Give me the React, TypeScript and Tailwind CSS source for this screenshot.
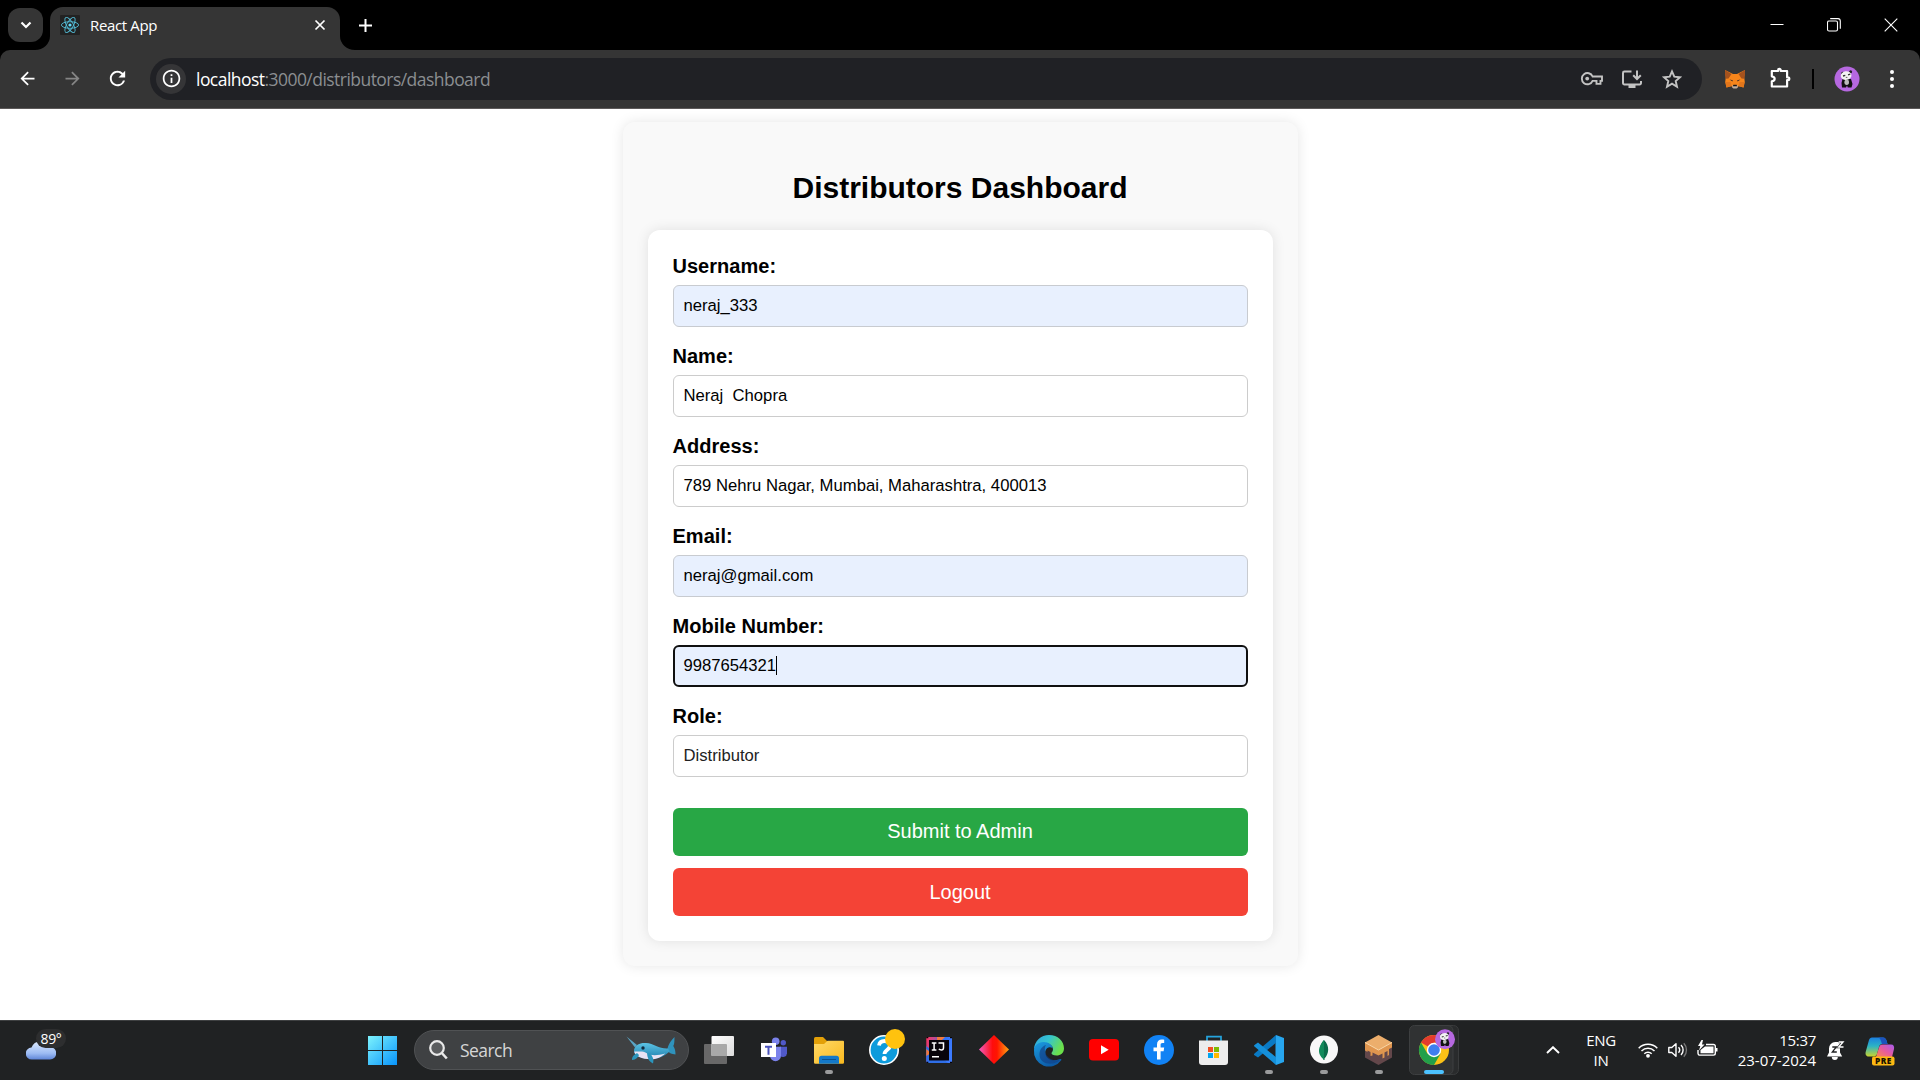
import React from "react";
import {
  MdArrowBack,
  MdArrowForward,
  MdRefresh,
  MdInfoOutline,
} from "react-icons/md";

const UI = "font-['Open_Sans','Noto_Sans',sans-serif]";

/* ---------- browser chrome ---------- */

function ReactLogo() {
  return (
    <svg width="20" height="20" viewBox="0 0 20 20" className="shrink-0">
      <rect width="20" height="20" rx="1" fill="#222" />
      <g fill="none" stroke="#53bcd6" strokeWidth="0.9">
        <ellipse cx="10" cy="10" rx="8.6" ry="3.3" />
        <ellipse cx="10" cy="10" rx="8.6" ry="3.3" transform="rotate(60 10 10)" />
        <ellipse cx="10" cy="10" rx="8.6" ry="3.3" transform="rotate(120 10 10)" />
      </g>
      <circle cx="10" cy="10" r="1.6" fill="#61dafb" />
    </svg>
  );
}

function TabStrip() {
  return (
    <div className="flex h-[50px] items-end bg-black">
      <div className="ml-2 mb-2 flex h-[34px] w-[35px] items-center justify-center rounded-xl bg-[#353535]">
        <svg width="12" height="8" viewBox="0 0 12 8" fill="none" stroke="#fff" strokeWidth="2.2">
          <path d="M1.5 1.5 6 6l4.500-4.500" />
        </svg>
      </div>
      <svg width="7" height="14" viewBox="8 0 7 14" className="w-[7px] shrink-0 overflow-visible">
        <path d="M0 14A15 14 0 0 0 15 0V14Z" fill="#353535" />
      </svg>
      <div className="flex h-[43px] w-[290px] items-center rounded-t-[13px] bg-[#353535] pb-[7px] pl-[10px] pr-[14px]">
        <ReactLogo />
        <span className="ml-[10px] flex-1 whitespace-nowrap text-[15px] tracking-[-0.35px] text-white">React App</span>
        <svg width="12" height="12" viewBox="0 0 12 12" stroke="#fff" strokeWidth="1.7">
          <path d="M1.500 1.500l9 9M10.500 1.500l-9 9" />
        </svg>
      </div>
      <svg width="15" height="14" viewBox="0 0 15 14" className="shrink-0">
        <path d="M15 14A15 14 0 0 1 0 0V14Z" fill="#353535" />
      </svg>
      <svg width="13" height="13" viewBox="0 0 13 13" className="mb-[18px] ml-[4px]" stroke="#fff" strokeWidth="2">
        <path d="M6.500 0v13M0 6.500h13" />
      </svg>
      <div className="flex-1" />
      <div className="mb-[18px] flex items-center gap-[43px] pr-[22px]">
        <svg width="14" height="14" viewBox="0 0 14 14" stroke="#fff" strokeWidth="1">
          <path d="M.5 6.500h13" />
        </svg>
        <svg width="14" height="14" viewBox="0 0 14 14" fill="none" stroke="#fff" strokeWidth="1.1">
          <rect x=".5" y="3" width="10" height="10" rx="1.500" />
          <path d="M3.200.6H11A2.500 2.500 0 0 1 13.300 3v7.700" />
        </svg>
        <svg width="14" height="14" viewBox="0 0 14 14" stroke="#fff" strokeWidth="1.1">
          <path d="M.7.7l12.600 12.600M13.300.7.7 13.300" />
        </svg>
      </div>
    </div>
  );
}

function Panda({ x, y, r }: { x: number; y: number; r: number }) {
  return (
    <g transform={`translate(${x} ${y}) scale(${r / 12.5})`}>
      <circle r="12.500" fill="#b668e0" />
      <path d="M-4.500 0 4 0 5.500 5 4.500 8.500H.8L0 6.500l-1 2h-4L-5.500 4Z" fill="#111" />
      <ellipse cx="-.3" cy="3.200" rx="2.300" ry="2.700" fill="#bbb" />
      <circle cx="-4.300" cy="-5.800" r="1.500" fill="#222" />
      <circle cx="3.600" cy="-7.300" r="1.500" fill="#222" />
      <ellipse cx="-.3" cy="-3.500" rx="5.400" ry="4.300" fill="#f3f3f3" transform="rotate(-10)" />
      <path d="M-4-3l2.300-.6M1-4.200l2.300-.6" stroke="#333" strokeWidth="1.300" />
      <path d="M-1.200-1.600h1.600" stroke="#555" strokeWidth=".9" />
    </g>
  );
}

function Toolbar() {
  return (
    <div className="bg-black">
      <div className="flex h-[59px] items-center rounded-t-[10px] border-b border-[#5c5959] bg-[#353535] pb-px">
        <div className="flex items-center pl-[17px]">
          <MdArrowBack className="size-[21px] text-white" />
          <MdArrowForward className="ml-[24px] size-[21px] text-[#858585]" />
          <MdRefresh className="ml-[23px] size-[23px] text-white" />
        </div>
        <div className="ml-[21px] flex h-[42px] w-[1552px] shrink-0 items-center rounded-full bg-[#202125] pl-[6px] pr-[20px]">
          <div className="flex size-[30px] items-center justify-center rounded-full bg-[#353537]">
            <MdInfoOutline className="size-[21px] text-white" />
          </div>
          <div className="ml-[10px] flex-1 whitespace-nowrap pt-[2px] text-[17.500px] tracking-[-0.54px] text-[#8b8e91]">
            <span className="text-white">localhost</span>:3000/distributors/dashboard
          </div>
          <div className="flex items-center">
            <svg width="24" height="16" viewBox="0 0 24 16" fill="none" stroke="#c3c3c3" strokeWidth="1.900">
              <path d="M12.600 5.500H22v4.400h-1.500v3h-4v-3h-3.900A5.600 5.600 0 1 1 12.600 5.500Z" />
              <circle cx="7.200" cy="7.600" r="1.900" fill="#c3c3c3" stroke="none" />
            </svg>
            <svg width="22" height="20" viewBox="0 0 22 20" fill="none" stroke="#c3c3c3" strokeWidth="2" className="ml-[17px]">
              <path d="M10.500 2.500H3.400A1.400 1.400 0 0 0 2 3.900v10.200a1.400 1.400 0 0 0 1.400 1.400h15.200a1.400 1.400 0 0 0 1.400-1.400V12" />
              <path d="M7.500 17.500h7" strokeWidth="3" />
              <path d="M16 1.500v8M12.200 6.200 16 10l3.800-3.800" />
            </svg>
            <svg width="20" height="20" viewBox="0 0 20 20" fill="none" stroke="#c3c3c3" strokeWidth="1.900" className="ml-[19px]">
              <path d="M10 2.400l2.300 5.300 5.700.5-4.300 3.800 1.300 5.700L10 14.700l-5 3 1.300-5.700L2 8.200l5.700-.5Z" />
            </svg>
          </div>
        </div>
        <svg width="22" height="20" viewBox="0 0 22 20" className="ml-[22px] mt-px">
          <path d="M1 1l8 4h4l8-4-.8 7 .6 5-1.200 5.500-5-1.200-2 1.700h-3.200l-2-1.700-5 1.200L1.200 13l.6-5Z" fill="#f6851b" />
          <path d="M1 1l6.500 4-3 4.500-2.700.3L1 6ZM21 1l-6.500 4 3 4.500 2.700.3L21 6Z" fill="#a5521d" />
          <path d="M5.500 10.500l3.300.7-.3 1.300ZM16.500 10.500l-3.300.7.3 1.300Z" fill="#3b2a2a" />
          <path d="M1.500 13h5l1 4-5 1.500ZM20.500 13h-5l-1 4 5 1.500Z" fill="#e2761b" />
          <path d="M8.500 16h5l.3 2.500-1.200 1H9.400l-1.200-1Z" fill="#c0ad9e" />
          <path d="M9.300 15.800h3.400l.4 1.500H8.900Z" fill="#161616" />
        </svg>
        <svg width="23" height="24" viewBox="0 0 23 24" fill="none" stroke="#fff" strokeWidth="2.200" className="ml-[23px] mb-[2px]">
          <path d="M3.500 5h5.600v-.8a1.300 1.300 0 0 1 2.600 0V5h6.400v6.400h.8a1.400 1.400 0 0 1 0 2.800h-.8v6.300H2.800v-5.200c3.800-.5 3.800-4.500 0-5V5Z" strokeLinejoin="round" />
        </svg>
        <div className="ml-[20px] h-[20px] w-[2px] bg-black" />
        <svg width="26" height="26" viewBox="0 0 26 26" className="ml-[20px]">
          <Panda x={13} y={13} r={12.5} />
        </svg>
        <svg width="6" height="20" viewBox="0 0 6 20" fill="#fff" className="ml-[29px]">
          <circle cx="3" cy="3" r="2" />
          <circle cx="3" cy="10" r="2" />
          <circle cx="3" cy="17" r="2" />
        </svg>
      </div>
    </div>
  );
}

/* ---------- page ---------- */

type FieldProps = { label: string; value: string; look: "plain" | "filled" | "focused" | "readonly" };

const LOOKS = {
  plain: "border border-[#ccc] bg-white px-[10px] text-black",
  filled: "border border-[#c8cbd0] bg-[#e8f0fe] px-[10px] text-black",
  focused: "border-2 border-[#101010] bg-[#e8f0fe] px-[9px] text-black",
  readonly: "border border-[#ccc] bg-white px-[10px] text-[#222]",
};

function Field({ label, value, look }: FieldProps) {
  return (
    <div className="h-[90px]">
      <div className="h-[30px] text-[20px] font-bold leading-[23px] tracking-[0.02px]">{label}</div>
      <div className={`flex h-[42px] items-center whitespace-pre rounded-[6px] pb-[2px] text-[16.667px] ${LOOKS[look]}`}>
        {value}
        {look === "focused" && <span className="h-[19px] w-px bg-black" />}
      </div>
    </div>
  );
}

const FIELDS: FieldProps[] = [
  { label: "Username:", value: "neraj_333", look: "filled" },
  { label: "Name:", value: "Neraj  Chopra", look: "plain" },
  { label: "Address:", value: "789 Nehru Nagar, Mumbai, Maharashtra, 400013", look: "plain" },
  { label: "Email:", value: "neraj@gmail.com", look: "filled" },
  { label: "Mobile Number:", value: "9987654321", look: "focused" },
  { label: "Role:", value: "Distributor", look: "readonly" },
];

function Dashboard() {
  return (
    <main className="flex h-[911px] items-start justify-center overflow-hidden bg-white pt-[13px] font-['Liberation_Sans',Arial,sans-serif] text-black">
      <div className="h-[844px] w-[675px] rounded-[12px] bg-[#f9f9f9] px-[25px] shadow-[0_0_12.500px_rgba(0,0,0,0.1)]">
        <h1 className="h-[108px] pt-[48px] text-center text-[30px] font-bold leading-[35px]">Distributors Dashboard</h1>
        <div className="h-[711px] rounded-[12px] bg-white px-[25px] pt-[25px] shadow-[0_0_12.500px_rgba(0,0,0,0.1)]">
          {FIELDS.map((f) => (
            <Field key={f.label} {...f} />
          ))}
          <div className="mt-[13px] flex flex-col gap-3">
            <button className="h-[48px] rounded-[6px] bg-[#28a745] pb-[2px] text-[20px] text-white">Submit to Admin</button>
            <button className="h-[48px] rounded-[6px] bg-[#f44336] text-[20px] text-white">Logout</button>
          </div>
        </div>
      </div>
    </main>
  );
}

/* ---------- taskbar ---------- */

function AppIcon({ children, running }: { children: React.ReactNode; running?: boolean }) {
  return (
    <svg width="55" height="60" viewBox="0 0 55 60" className="shrink-0">
      {children}
      {running && <rect x="23" y="50" width="8" height="4" rx="2" fill="#9a9b9c" />}
    </svg>
  );
}

function Narwhal() {
  return (
    <svg width="50" height="28" viewBox="0 0 50 28">
      <defs>
        <linearGradient id="nw" x1="0" y1="0" x2="0" y2="1">
          <stop offset="0" stopColor="#5cc3e4" />
          <stop offset="1" stopColor="#1f7fae" />
        </linearGradient>
      </defs>
      <path d="M.5.5 11 9l-2 2.500Z" fill="#5aa5c6" />
      <path d="M41 15c1-3 .5-7 7.500-14-.2 4 .2 6-1.200 9 1.700 2.500 2.200 5 2.200 8.500-4-.5-6-1.500-7.500-3Z" fill="#2f93bd" />
      <path d="M8 14c1-5 6-7.500 12-7 8 .500 13 6 22 5.500l1.500 3C39 20 33 23 25 23 16 23 7 20 8 14Z" fill="url(#nw)" />
      <path d="M8.300 15.500c5 .5 8-1 12 1.500 5 3 11 2.500 19 .500C34 22 30 23.300 25 23.200 16 23.200 8.500 20 8.300 15.500Z" fill="#e9e2f3" />
      <path d="M11 17c-4 2.500-5 4-5 7 4-.3 6-2.500 7-5ZM21 17c.500 5 1.500 8 6 10.500 1.300-4-.5-7.500-3-10Z" fill="#2b95bd" />
      <circle cx="17" cy="12" r="1.700" fill="#112a3d" />
    </svg>
  );
}

function TaskbarApps() {
  return (
    <>
      <AppIcon>
        <defs>
          <linearGradient id="tv" x1="0" y1="0" x2="1" y2="1">
            <stop offset="0" stopColor="#fff" />
            <stop offset="1" stopColor="#dcdcdc" />
          </linearGradient>
        </defs>
        <rect x="12" y="24" width="23" height="20" rx="1" fill="#686868" />
        <rect x="19.500" y="16" width="22.500" height="20" rx="1" fill="url(#tv)" />
        <path d="M19.500 24H34a1 1 0 0 1 1 1v11H19.500Z" fill="#a9a9a9" />
      </AppIcon>
      <AppIcon>
        <circle cx="36.300" cy="22.700" r="2.700" fill="#5059c9" />
        <path d="M33 26.700h7v6.500a4 4 0 0 1-7 2.500Z" fill="#5059c9" />
        <circle cx="28.700" cy="21.300" r="3.800" fill="#7b83eb" />
        <path d="M23 26.700h11v9a5.500 5.500 0 0 1-11 0Z" fill="#7b83eb" />
        <rect x="14" y="23" width="15" height="14" fill="#fff" />
        <path d="M18 26.700h7M21.500 26.700v8" stroke="#4b53bc" strokeWidth="2" />
      </AppIcon>
      <AppIcon running>
        <defs>
          <linearGradient id="fd" x1="0" y1="0" x2="1" y2="1">
            <stop offset="0" stopColor="#ffd968" />
            <stop offset="1" stopColor="#f9b91e" />
          </linearGradient>
        </defs>
        <path d="M12 18.500a1.500 1.500 0 0 1 1.500-1.500H21l4 4v5H12Z" fill="#e3a008" />
        <path d="M12 24h10l3.500-3.300H41a1 1 0 0 1 1 1v20.800a1.300 1.300 0 0 1-1.300 1.300H13.300A1.300 1.300 0 0 1 12 42.500Z" fill="url(#fd)" />
        <path d="M17 43.700v-5.500a2.500 2.500 0 0 1 2.500-2.500h15a2.500 2.500 0 0 1 2.500 2.500v5.500Z" fill="#1479c9" />
        <path d="M20 39.500h14" stroke="#0a5291" />
      </AppIcon>
      <AppIcon>
        <circle cx="27" cy="30" r="14.200" fill="#0d9bdc" stroke="#fff" strokeWidth="1.600" />
        <path d="M22 25.500c.500-3.500 3-4.500 5.500-4.500 3.500 0 5.500 2 5.500 4.700 0 4-5.500 4-5.500 8.300" fill="none" stroke="#fff" strokeWidth="3.800" />
        <circle cx="27.300" cy="38.500" r="2.500" fill="#fff" />
        <circle cx="38" cy="19" r="10" fill="#ffc20e" />
      </AppIcon>
      <AppIcon>
        <defs>
          <linearGradient id="ij" x1="0" y1="0" x2="1" y2=".3">
            <stop offset="0" stopColor="#fe315d" />
            <stop offset=".3" stopColor="#c04a8e" />
            <stop offset=".55" stopColor="#2b6df6" />
            <stop offset="1" stopColor="#3c7bff" />
          </linearGradient>
        </defs>
        <rect x="14.300" y="17" width="25.700" height="26" fill="url(#ij)" />
        <path d="M14.300 26V43H36l-8-6Z" fill="#2f6fe8" />
        <path d="M14.300 29v7l5-3Z" fill="#f2793c" />
        <path d="M25 17h8l-3 3h-5Z" fill="#f2793c" />
        <path d="M17 20H37v20.500H17Z" fill="#08040a" />
        <path d="M14.300 17h2v1.300h-2ZM38 17h2v1.300h-2ZM14.300 41.700h2V43h-2ZM38 41.700h2V43h-2Z" fill="#08040a" />
        <path d="M19.800 23h4.600M22.100 23v7M19.800 30h4.600M26.500 23h5v4.700c0 1.600-1 2.300-2.100 2.300s-2-.4-2.500-1.100M20 36.700h7" fill="none" stroke="#fff" strokeWidth="1.500" />
      </AppIcon>
      <AppIcon>
        <defs>
          <linearGradient id="dm" x1="0" y1="0" x2="1" y2="0">
            <stop offset="0" stopColor="#f25cc0" />
            <stop offset=".45" stopColor="#ff0d0d" />
            <stop offset=".6" stopColor="#ff1500" />
            <stop offset="1" stopColor="#ffa412" />
          </linearGradient>
        </defs>
        <path d="M27 15 42 29.500 27 44 12 29.500Z" fill="url(#dm)" />
      </AppIcon>
      <AppIcon>
        <defs>
          <linearGradient id="e1" x1="0" y1="0" x2="1" y2=".4">
            <stop offset="0" stopColor="#2fa4e0" />
            <stop offset=".5" stopColor="#35c4cf" />
            <stop offset="1" stopColor="#6be04b" />
          </linearGradient>
          <linearGradient id="e2" x1="0" y1="0" x2=".6" y2="1">
            <stop offset="0" stopColor="#1b9de2" />
            <stop offset="1" stopColor="#0c59a4" />
          </linearGradient>
        </defs>
        <path d="M12 29C12.500 21 19 15 27 15c9 0 15 6 15 13.500 0 4.500-3.500 7-7.500 7-3.500 0-5-1.300-5-2.300s1.500-1.500 1.500-4.200c0-3-3.500-6-8.500-6-5 0-8.500 2-10.500 6Z" fill="url(#e1)" />
        <path d="M12 30c0-4 4-8 9.500-8 5.500 0 9 3 9.300 6.500-3-3-7.500-.5-7.500 4 0 6 6 10 14.700 6.500 1-.4 1.800.3 1.200 1.200A15 15 0 0 1 12 30Z" fill="url(#e2)" />
        <path d="M17.500 34.500c0-5 3-8.500 6.500-9.500-2.500 3-1.700 13 8 15.200 2.500.5 5-.1 6-.7C34 45.500 17.500 46 17.500 34.500Z" fill="#123f86" opacity=".65" />
      </AppIcon>
      <AppIcon>
        <rect x="12" y="19" width="30" height="21.500" rx="4" fill="#f00" />
        <path d="M24 25.300v9l7.700-4.500Z" fill="#fff" />
      </AppIcon>
      <AppIcon>
        <circle cx="27" cy="30" r="15" fill="#1182f4" />
        <path d="M25 39.500V31.300h-3.500v-3.700H25v-3c0-3.300 2-5 4.700-5 1 0 2 .1 2.500.2v3.300h-1.700c-1.500 0-1.900.8-1.900 1.800v2.700h3.600l-.6 3.700h-3v8.200Z" fill="#fff" />
      </AppIcon>
      <AppIcon>
        <path d="M20 22v-5.300h14V22" fill="none" stroke="#25a4dd" strokeWidth="1.700" />
        <path d="M12 20.500h29V42a3 3 0 0 1-3 3H15a3 3 0 0 1-3-3Z" fill="#ededed" />
        <path d="M21 27h5v5h-5Z" fill="#f25022" />
        <path d="M27 27h5v5h-5Z" fill="#7fba00" />
        <path d="M21 33h5v5h-5Z" fill="#00a4ef" />
        <path d="M27 33h5v5h-5Z" fill="#ffb900" />
      </AppIcon>
      <AppIcon running>
        <path d="M34 15 42 18v24l-8 3-.5-5.500V21Z" fill="#27a6ef" />
        <path d="M34 15v7.700L16 37.500l-3.500-2.300a1 1 0 0 1 0-1.600Z" fill="#0a7ac4" />
        <path d="M34 45v-7.700L16 22.500 12.500 25a1 1 0 0 0 0 1.600Z" fill="#1590da" />
      </AppIcon>
      <AppIcon running>
        <circle cx="27" cy="29.500" r="14" fill="#f8f8f8" />
        <path d="M27 20c-6 6-5 14-.5 18.500V40h1v-1.500C32 34 33 26 27 20Z" fill="#0b6b4a" />
        <path d="M27 20v20c-.3-1-5.500-4-5-10 .3-4 3-7 5-10Z" fill="#128a5b" />
      </AppIcon>
      <AppIcon running>
        <path d="M13 24v13.500L26.500 45 40 37.500V24Z" fill="#63474a" />
        <path d="M13 22v8.500l2.500 1.500v-1.500l3 1.500v4l2-.5v-3l6 3 4-2v5l2-1v-5l3-1.500v5l1.500-1V29l3-1.500V22Z" fill="#e0964f" />
        <path d="M26.500 15 40 22.500 26.500 30 13 22.500Z" fill="#ecae6c" />
        <path d="M13 22.500 26.500 30 40 22.500" fill="none" stroke="#f8d6a8" />
      </AppIcon>
      <AppIcon>
        <rect x="8" y="5.500" width="43.500" height="49" rx="5" fill="#292b2c" stroke="#393b3c" />
        <rect x="2.500" y="5.500" width="43.500" height="49" rx="5" fill="#303233" stroke="#3d3f40" />
        <circle cx="27" cy="30" r="15" fill="#fbc116" />
        <path d="M27 30 14 22.500A15 15 0 0 1 40 22.500H27Z" fill="#e33b2e" />
        <path d="M14 22.500A15 15 0 0 0 27 45l6.500-11.200L27 30l-6.500 3.700Z" fill="#22a04a" />
        <circle cx="27" cy="30" r="7.200" fill="#fff" />
        <circle cx="27" cy="30" r="5.800" fill="#3f7ef0" />
        <Panda x={38} y={19.300} r={10} />
        <rect x="17" y="50" width="20" height="4" rx="2" fill="#4cc2ff" />
      </AppIcon>
    </>
  );
}

function Tray() {
  return (
    <div className="flex h-full items-center text-[15px] leading-[20px] text-white">
      <svg width="14" height="8" viewBox="0 0 14 8" fill="none" stroke="#fff" strokeWidth="1.900">
        <path d="M1 7l6-5.800L13 7" />
      </svg>
      <div className="ml-[20px] w-[42px] pb-px text-center tracking-[-0.3px]">
        ENG
        <br />
        IN
      </div>
      <svg width="20" height="16" viewBox="0 0 20 16" fill="none" stroke="#fff" strokeWidth="1.500" className="ml-[16px]">
        <path d="M.7 6.200a13.200 13.200 0 0 1 18.600 0M3.500 9a9.200 9.200 0 0 1 13 0M6.300 11.800a5.300 5.300 0 0 1 7.400 0" />
        <circle cx="10" cy="13.800" r="1.900" fill="#fff" stroke="none" />
      </svg>
      <svg width="20" height="16" viewBox="0 0 20 16" fill="none" stroke="#fff" strokeWidth="1.400" className="ml-[10px]">
        <path d="M.8 5.500h3L8 1.800v12.400l-4.200-3.700h-3Z" strokeLinejoin="round" />
        <path d="M10.500 5.300a4 4 0 0 1 0 5.400M13 3a7 7 0 0 1 0 10" />
        <path d="M15.800 1.200a10 10 0 0 1 0 13.600" stroke="#777" />
      </svg>
      <svg width="21" height="17" viewBox="0 0 21 17" fill="none" stroke="#fff" strokeWidth="1.400" className="ml-[9px] mb-[3px]">
        <path d="M9 4.500h7.500A1.800 1.800 0 0 1 18.300 6.300v7a1.800 1.800 0 0 1-1.800 1.800H3A1.800 1.800 0 0 1 1 13.300V10" />
        <path d="M8 6.500h8.500v6.700H3.500V10Z" fill="#fff" stroke="none" />
        <path d="M19.500 8v3.500" strokeWidth="2" />
        <path d="M4.500 0 1 6h2.300L2 10.500 7.500 4.500H5L6 0Z" fill="#fff" stroke="none" />
      </svg>
      <div className="ml-[18px] w-[80px] whitespace-nowrap pb-px text-right">
        <span className="tracking-[-0.3px]">15:37</span>
        <br />
        23-07-2024
      </div>
      <svg width="18" height="21" viewBox="0 0 18 21" className="ml-[11px]">
        <path d="M2 8.500A6.300 6.300 0 0 1 8.300 2H13v10.500l2.200 4H0L2 12.500Z" fill="#fff" />
        <path d="M4.800 17h6a3 3 0 0 1-6 0Z" fill="#fff" />
        <path d="M5.300 7h4L5.300 12h4.500" fill="none" stroke="#202223" strokeWidth="1.300" />
        <path d="M11.700 2h4.300L11.700 7h4.800" fill="none" stroke="#202223" strokeWidth="2.600" />
        <path d="M11.700 2h4.300L11.700 7h4.800" fill="none" stroke="#fff" strokeWidth="1.400" />
      </svg>
      <svg width="30" height="30" viewBox="0 0 30 30" className="ml-[20px] mr-[25px] mt-px">
        <defs>
          <linearGradient id="c1" x1="0" y1="0" x2="0" y2="1">
            <stop offset="0" stopColor="#1b7fe0" />
            <stop offset=".45" stopColor="#2bb3c5" />
            <stop offset="1" stopColor="#c9d52d" />
          </linearGradient>
          <linearGradient id="c2" x1="1" y1="0" x2="0" y2="1">
            <stop offset="0" stopColor="#a65cf0" />
            <stop offset=".5" stopColor="#e65a9e" />
            <stop offset="1" stopColor="#f98a4b" />
          </linearGradient>
        </defs>
        <path d="M7 1.500h11c2 0 3 1.500 3.500 3L22.500 8h-5c-2 0-3 1-3.500 3l-2 7c-.5 1.500-1.500 2.500-3.500 2.500H3.500C1 20.500 0 18 .8 15.500L4 4C4.500 2.500 5.500 1.500 7 1.500Z" fill="url(#c1)" />
        <path d="M13 1.500h5c2 0 3 1.500 3.500 3L22.500 8H17c-1-3-1.500-6-4-6.500Z" fill="#1c53bd" />
        <path d="M17.500 8.500H26c2.500 0 3.500 2 3 4.500L27 21H11l3-9.500c.6-2 1.500-3 3.500-3Z" fill="url(#c2)" />
        <rect x="7" y="20.500" width="22.500" height="9" rx="2" fill="#fdb913" />
        <text x="18.300" y="28" textAnchor="middle" fontSize="8.300" fontWeight="800" fill="#1a1300" fontFamily="Open Sans" letterSpacing=".4">
          PRE
        </text>
      </svg>
    </div>
  );
}

function Taskbar() {
  return (
    <footer className="flex h-[60px] items-center bg-[#202223] shadow-[inset_0_1px_0_#3e4041]">
      <div className="relative h-full w-[368px] shrink-0">
        <svg width="30" height="19" viewBox="0 0 30 19" className="absolute left-[26px] top-[21px]">
          <defs>
            <linearGradient id="cl" x1="0" y1="0" x2="0" y2="1">
              <stop offset="0" stopColor="#dbe8fd" />
              <stop offset=".65" stopColor="#9dbcf3" />
              <stop offset="1" stopColor="#5f86d8" />
            </linearGradient>
          </defs>
          <path d="M6 18.500a6 6 0 0 1-.5-12C7 2.500 10 .5 13.500.5c4 0 6.500 2.500 7.500 5.500h3a6 6 0 0 1 0 12.500Z" fill="url(#cl)" />
        </svg>
        <div className="absolute left-[36px] top-[9px] flex h-[19px] w-[30px] items-center justify-center rounded-full bg-[#2d2e2f] text-[14px] tracking-[-0.4px] text-white">
          89°
        </div>
      </div>
      <svg width="29" height="29" viewBox="0 0 29 29" className="shrink-0">
        <defs>
          <linearGradient id="win" gradientUnits="userSpaceOnUse" x1="0" y1="0" x2="29" y2="29">
            <stop offset="0" stopColor="#7df3fd" />
            <stop offset="1" stopColor="#0894fb" />
          </linearGradient>
        </defs>
        <path d="M0 0h14v14H0ZM15 0h14v14H15ZM0 15h14v14H0ZM15 15h14v14H15Z" fill="url(#win)" />
      </svg>
      <div className="ml-[17px] flex h-[40px] w-[275px] shrink-0 items-center rounded-full border border-[#505254] bg-[#3f4143] pl-[14px] pr-[12px]">
        <svg width="19" height="20" viewBox="0 0 19 20" fill="none" stroke="#e9e9e9" strokeWidth="2.200">
          <circle cx="8" cy="8" r="6.800" fill="#5a5c5e" />
          <path d="M12.800 13l5 5.500" strokeWidth="2.600" />
        </svg>
        <span className="ml-[12px] flex-1 pt-px text-[17.500px] tracking-[-0.55px] text-[#d6d6d6]">Search</span>
        <Narwhal />
      </div>
      <div className="ml-[3px] flex shrink-0">
        <TaskbarApps />
      </div>
      <div className="flex-1" />
      <Tray />
    </footer>
  );
}

export default function App() {
  return (
    <div className={`flex h-[1080px] w-[1920px] flex-col overflow-hidden ${UI}`}>
      <TabStrip />
      <Toolbar />
      <Dashboard />
      <Taskbar />
    </div>
  );
}
